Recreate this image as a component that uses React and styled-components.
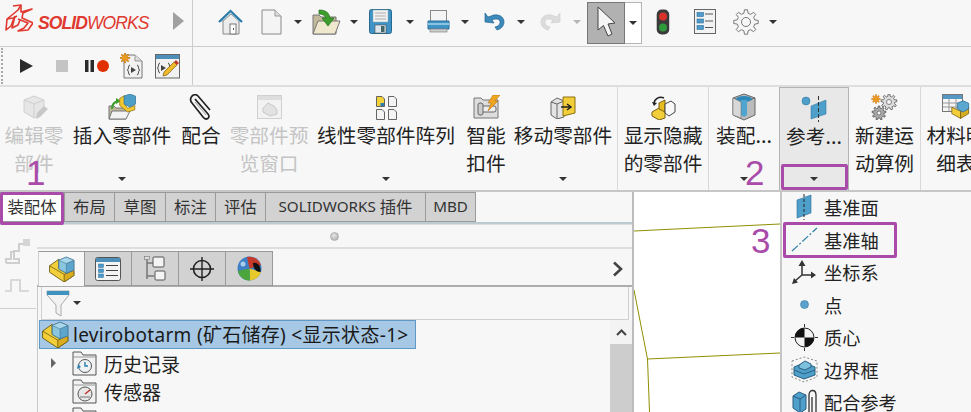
import React from "react";
import styled, { createGlobalStyle } from "styled-components";

const CJK = `"Noto Sans CJK SC", "Noto Sans", sans-serif`;
const LATIN = `"Noto Sans", "Noto Sans CJK SC", sans-serif`;
const PURPLE = "#a94ba9";

const Global = createGlobalStyle`
  html, body { margin: 0; padding: 0; background: #f7f7f7; }
  #root { width: 971px; height: 412px; overflow: hidden; }
  * { box-sizing: border-box; }
`;

const Page = styled.div`
  position: relative; width: 971px; height: 412px; overflow: hidden;
  background: #f7f7f7; font-family: ${CJK}; color: #222;
  display: flex; flex-direction: column;
`;
const Bar = styled.div`
  display: flex; flex: none; height: ${p => p.$h}px;
  border-bottom: ${p => p.$line}px solid ${p => p.$color};
`;
const BrandCell = styled.div`
  width: 193px; flex: none; border-right: 1px solid #ccc; display: flex; align-items: flex-start;
  padding: 4px 0 0 4px;
`;
const Wordmark = styled.div`
  margin: 9px 0 0 5px; width: 112px; font: italic 700 17.5px/20px "Liberation Sans", sans-serif; color: #e0392f;
  letter-spacing: -0.9px; white-space: nowrap;
`;
const WordmarkLight = styled.span`font-weight: 400;`;
const ToolRow = styled.div`
  flex: 1; display: flex; align-items: center; padding-left: 25px; padding-bottom: 3px;
`;
const Slot = styled.div`
  flex: none; width: ${p => p.$w}px; margin-left: ${p => p.$ml || 0}px; margin-top: ${p => p.$mt || 0}px;
  display: flex; align-items: center; justify-content: center;
`;
const SelectMain = styled.div`
  flex: none; width: 38px; height: 42px; margin-left: 6px; margin-top: 3px; background: #b1b1b1; border: 1px solid #777;
  display: flex; align-items: center; justify-content: center;
`;
const SelectSplit = styled.div`
  flex: none; width: 17px; height: 42px; margin-top: 3px; background: #fff; border: 1px solid #b5b5b5; border-left: none;
  display: flex; align-items: center; justify-content: center;
`;
const Caret = styled.span`
  display: block; flex: none; width: 0; height: 0;
  border-left: 4px solid transparent; border-right: 4px solid transparent;
  border-top: 4px solid ${p => p.$dim ? "#b5b5b5" : "#333"};
`;
const MacroCell = styled.div`
  width: 193px; flex: none; border-right: 1px solid #ccc; display: flex; align-items: center;
`;
const Grip = styled.div`
  flex: none; margin-left: 1px; width: 2px; height: 36px; border-left: 2px dotted #aaa;
`;

const Ribbon = styled.div`
  flex: none; height: 105px; display: flex; overflow: hidden; border-bottom: 2px solid #c6c6c6;
`;
const RibbonBtn = styled.div`
  flex: none; width: ${p => p.$w}px; display: flex; flex-direction: column; align-items: center;
  padding: 6px ${p => p.$pr || 0}px 9px 0;
  font-size: 19.7px; line-height: 28px; text-align: center; white-space: nowrap;
  color: ${p => p.$off ? "#c4c4c4" : "#222"};
  border-right: ${p => p.$sep ? "1px solid #d8d8d8" : "none"};
  ${p => p.$active ? "background:#e8e8e8;border:1px solid #b3b3b3;border-bottom:none;" : ""}
`;
const IconBox = styled.div`
  height: 28px; flex: none; display: flex; align-items: center; justify-content: center;
`;
const Label = styled.div`flex: none;`;
const CaretWrap = styled.div`margin-top: auto;`;

const Body = styled.div`flex: 1; display: flex; min-height: 0;`;
const LeftCol = styled.div`
  width: 634px; flex: none; border-right: 2px solid #bdbdbd; display: flex; flex-direction: column; min-height: 0;
`;
const TabRow = styled.div`
  flex: none; height: 32px; display: flex; border-bottom: 2px solid #bccbd0;
`;
const Tab = styled.div`
  flex: none; width: ${p => p.$w}px; height: 30px; display: flex; align-items: center; justify-content: center; gap: 4px;
  padding-bottom: 2px;
  font-size: 16.4px; color: #333; white-space: nowrap;
  background: ${p => p.$active ? "#fff" : "#d2d2d2"};
  border: 1px solid #9a9a9a; border-left: none;
`;
const LatinText = styled.span`font-family: ${LATIN}; font-size: 15.2px;`;
const PanelRow = styled.div`
  flex: 1; display: flex; min-height: 0; border-top: 1px solid #ddd;
`;
const SideStrip = styled.div`
  width: 37px; flex: none; display: flex; flex-direction: column; align-items: flex-start;
`;
const StripIcons = styled.div`
  height: 84px; width: 36px; border-bottom: 1px solid #cfcfcf; padding: 13px 0 0 5px;
  display: flex; flex-direction: column; gap: 15px;
`;
const Manager = styled.div`
  flex: 1; min-width: 0; display: flex; flex-direction: column; min-height: 0;
`;
const Splitter = styled.div`
  flex: none; height: 24px; border-bottom: 2px solid #ddd; display: flex; align-items: center; justify-content: center;
`;
const Dot = styled.span`
  width: 9px; height: 9px; border-radius: 50%; background: radial-gradient(circle at 40% 35%, #e6e6e6, #a8a8a8);
  border: 1px solid #b0b0b0;
`;
const FmBar = styled.div`
  flex: none; height: 38px; padding-top: 3px; display: flex; align-items: flex-end; border-bottom: 2px solid #adadad;
  padding-left: 1px; padding-right: 9px;
`;
const FmTab = styled.div`
  flex: none; width: 47px; height: 35px; margin-bottom: -1px; display: flex; align-items: center; justify-content: center;
  background: ${p => p.$active ? "#f7f7f7" : "#d2d2d2"};
  border: 1px solid #9a9a9a; border-left: ${p => p.$first ? "1px solid #d0d0d0" : "none"};
  border-bottom: ${p => p.$active ? "none" : "1px solid #9a9a9a"};
`;
const Chevron = styled.div`margin-left: auto; align-self: center; display: flex;`;
const TreeArea = styled.div`
  flex: 1; min-height: 0; display: flex; flex-direction: column; border-left: 1px solid #c8c8c8; overflow: hidden;
`;
const FilterBox = styled.div`
  flex: none; height: 33px; margin: 0 3px; border: 1px solid #d0d0d0; border-top: none; display: flex; align-items: center;
  padding-left: 4px; gap: 3px;
`;
const TreeSplit = styled.div`flex: 1; min-height: 0; display: flex;`;
const TreeList = styled.div`flex: 1; min-width: 0; padding-left: 1px;`;
const RootRow = styled.div`
  width: 377px; height: 29px; display: flex; align-items: center; background: #a6c8e4; border: 1px solid #5f9ac6;
  padding-left: 2px; gap: 4px; white-space: nowrap; letter-spacing: 0.3px;
  font: 19px/26px ${LATIN}; color: #1a1a1a;
`;
const TreeRow = styled.div`
  height: 28px; display: flex; align-items: center; font-size: 19px; white-space: nowrap; padding-left: 12px;
  &:first-of-type { margin-top: 3px; }
`;
const Expander = styled.span`
  flex: none; width: 0; height: 0; margin-right: 16px;
  border-top: 5px solid transparent; border-bottom: 5px solid transparent;
  border-left: ${p => p.$show ? "5px solid #666" : "5px solid transparent"};
`;
const TreeText = styled.span`margin-left: 7px;`;
const Scroll = styled.div`
  width: 22px; flex: none; display: flex; flex-direction: column;
`;
const ScrollUp = styled.div`
  height: 24px; flex: none; background: #f3f3f3; display: flex; align-items: center; justify-content: center;
`;
const ScrollThumb = styled.div`flex: 1; background: #cdcdcd;`;
const Graphics = styled.div`flex: none; width: 146px; background: #fff; position: relative; overflow: hidden;`;
const Flyout = styled.div`
  flex: none; width: 191px; background: #f7f7f7; border-left: 2px solid #c6c6c6; display: flex; flex-direction: column;
`;
const FlyItem = styled.div`
  flex: none; height: 32.5px; display: flex; align-items: center; padding: 0 0 2px 2px; font-size: 18.2px; color: #222; white-space: nowrap;
`;
const FlyIcon = styled.div`flex: none; width: 40px; display: flex; justify-content: center; align-items: center;`;

const Mark = styled.div`
  position: absolute; left: ${p => p.$x}px; top: ${p => p.$y}px; width: ${p => p.$w}px; height: ${p => p.$h}px;
  border: 3px solid ${PURPLE}; border-radius: 2px; pointer-events: none;
`;
const Num = styled.div`
  position: absolute; left: ${p => p.$x}px; top: ${p => p.$y}px;
  font: 35px/36px "Liberation Sans", sans-serif; color: ${PURPLE};
`;

const gearPath = (cx, cy, ro, ri, n) => {
  let d = "";
  const step = (Math.PI * 2) / n;
  for (let i = 0; i < n; i++) {
    const a = i * step - Math.PI / 2;
    const pt = (r, t) => `${(cx + r * Math.cos(t)).toFixed(2)} ${(cy + r * Math.sin(t)).toFixed(2)}`;
    d += `${i ? "L" : "M"}${pt(ri, a - step * 0.3)} L${pt(ro, a - step * 0.16)} L${pt(ro, a + step * 0.16)} L${pt(ri, a + step * 0.3)} `;
  }
  return d + "Z";
};

const Ic = ({ w, h, vb, children }) => (
  <svg width={w} height={h} viewBox={vb || `0 0 ${w} ${h}`} style={{ display: "block", flex: "none" }}>{children}</svg>
);

const DsMark = () => (
  <Ic w={29} h={29}>
    <g fill="none" stroke="#e0392f" strokeWidth="1.6" strokeLinejoin="round">
      <path d="M9 2 L17 1 L14 6 L8 11 L3 15 L9 14 L13 12" />
      <path d="M3 15 L2 26 L7 22 L10 14" />
      <path d="M11 12 L8 24 L14 21 L16 16" />
      <path d="M17 1 L17 8 L28 5 L19 9 L18 14 L29 19 L24 26 L14 27 L20 24 L24 19 L14 15" />
    </g>
  </Ic>
);
const Home = () => (
  <Ic w={25} h={26}>
    <path d="M5 12 V25 H21 V12 L13 5 Z" fill="#ececec" stroke="#888" />
    <path d="M1 13 L12.5 2 L24 13" fill="none" stroke="#2c7ba8" strokeWidth="2.2" />
    <path d="M3 13 L12.5 4 L22 13" fill="none" stroke="#7fb7d4" strokeWidth="0.8" />
    <rect x="12" y="15" width="6" height="10" fill="#fff" stroke="#777" />
    <rect x="15" y="19" width="1" height="2" fill="#555" />
  </Ic>
);
const Doc = () => (
  <Ic w={21} h={26}>
    <path d="M1 1 H14 L20 7 V25 H1 Z" fill="#f4f4f4" stroke="#8a8a8a" />
    <path d="M14 1 V7 H20" fill="#ddd" stroke="#9a9a9a" />
  </Ic>
);
const OpenFolder = () => (
  <Ic w={29} h={26}>
    <path d="M1 25 V6 H7 L9 8 H24 V25 Z" fill="#c2b99b" stroke="#777" />
    <path d="M1 25 L6 12 H28 L23 25 Z" fill="#efe8cf" stroke="#777" />
    <path d="M7 1 C13 1 17 3 18 9 H22 L16 17 L10 9 H14 C13 6 10 5 7 5 Z" fill="#3b9d2b" stroke="#23701a" strokeWidth="0.7" />
  </Ic>
);
const Save = () => (
  <Ic w={23} h={25}>
    <rect x="0.5" y="0.5" width="22" height="24" rx="2" fill="#3f93c7" stroke="#26688f" />
    <rect x="4" y="1" width="15" height="12" fill="#f2f2f2" stroke="#8aa" strokeWidth="0.5" />
    <path d="M6 4 H17 M6 7 H17 M6 10 H17" stroke="#aaa" />
    <rect x="6" y="16" width="11" height="8" fill="#dce6ec" stroke="#555" strokeWidth="0.6" />
    <rect x="12" y="17" width="3.5" height="6" fill="#466" />
  </Ic>
);
const Printer = () => (
  <Ic w={23} h={23}>
    <rect x="3.5" y="0.5" width="16" height="11" fill="#f4f4f4" stroke="#888" />
    <path d="M1 11 H22 V19 H1 Z" fill="#3d93c6" stroke="#2b6f99" />
    <rect x="1" y="13" width="21" height="2" fill="#8cc3e0" />
    <rect x="3" y="19" width="17" height="3" fill="#ccc" stroke="#888" strokeWidth="0.7" />
  </Ic>
);
const Undo = ({ dim }) => (
  <Ic w={21} h={19}>
    <g transform={dim ? "translate(21 0) scale(-1 1)" : undefined}>
      <path d="M7 4 C13 1 20 4 20 10 C20 14 17 17 13 18 L11 15 C15 14 16 12 16 10 C16 7 12 6 8 8 L10 11 L1 10 L1 1 L4 5 Z"
        fill={dim ? "#dcdcdc" : "#3c89bb"} stroke={dim ? "#d0d0d0" : "#27648f"} strokeWidth="0.7" />
    </g>
  </Ic>
);
const Cursor = () => (
  <Ic w={20} h={34}>
    <path d="M2 1 L2 24 L7.5 19.5 L12 30 L16 28 L12 18 L19 17 Z" fill="#f5f5f5" stroke="#444" strokeWidth="1" strokeLinejoin="round" />
  </Ic>
);
const Traffic = () => (
  <Ic w={14} h={26}>
    <rect width="12.5" height="25" x="0.7" y="0.5" rx="5" fill="#3a3a3a" />
    <circle cx="7" cy="7.5" r="4" fill="#d8322b" />
    <circle cx="7" cy="18.5" r="4" fill="#2f9a3b" />
  </Ic>
);
const ListPanel = () => (
  <Ic w={22} h={25}>
    <rect x="0.5" y="0.5" width="21" height="24" fill="#f2f2f2" stroke="#666" />
    <rect x="3" y="3.5" width="6.5" height="4" fill="#4d9acb" stroke="#2b6f99" strokeWidth="0.6" />
    <rect x="3" y="10" width="6.5" height="4" fill="#4d9acb" stroke="#2b6f99" strokeWidth="0.6" />
    <rect x="3" y="16.5" width="6.5" height="4" fill="#4d9acb" stroke="#2b6f99" strokeWidth="0.6" />
    <path d="M11 5 H19 M11 12 H19 M11 18.5 H19" stroke="#555" strokeWidth="1" />
  </Ic>
);
const FmList = () => (
  <Ic w={26} h={24}>
    <rect x="0.5" y="0.5" width="25" height="23" rx="2" fill="#f4f4f4" stroke="#555" />
    <rect x="1" y="1" width="24" height="4" fill="#4d8fb9" />
    <rect x="3.5" y="7" width="5" height="3.5" fill="#4d9acb" stroke="#2b6f99" strokeWidth="0.5" />
    <rect x="3.5" y="12" width="5" height="3.5" fill="#4d9acb" stroke="#2b6f99" strokeWidth="0.5" />
    <rect x="3.5" y="17" width="5" height="3.5" fill="#4d9acb" stroke="#2b6f99" strokeWidth="0.5" />
    <path d="M11 8.5 H23 M11 13.5 H23 M11 18.5 H23" stroke="#444" />
  </Ic>
);
const GearIcon = () => (
  <Ic w={26} h={26}>
    <path d={gearPath(13, 13, 12.3, 9, 8)} fill="#f7f7f7" stroke="#777" strokeWidth="1" strokeLinejoin="round" />
    <circle cx="13" cy="13" r="4.5" fill="#f7f7f7" stroke="#777" />
  </Ic>
);
const Play = () => <Ic w={13} h={14}><path d="M0 0 L13 7 L0 14 Z" fill="#2a2a2a" /></Ic>;
const Stop = () => <Ic w={12} h={12}><rect width="12" height="12" fill="#c4c4c4" /></Ic>;
const Pause = () => <Ic w={9} h={12}><path d="M0 0 H3.5 V12 H0 Z M5.5 0 H9 V12 H5.5 Z" fill="#2a2a2a" /></Ic>;
const Rec = () => <Ic w={12} h={12}><circle cx="6" cy="6" r="6" fill="#e03000" /></Ic>;
const MacroNew = () => (
  <Ic w={23} h={26}>
    <path d="M4 2 H15 L22 8 V25 H4 Z" fill="#f2f2f2" stroke="#777" />
    <path d="M15 2 V8 H22" fill="#ddd" stroke="#999" />
    <path d={gearPath(5, 5, 5, 3, 8)} fill="#eb9b1c" stroke="#b86a10" strokeWidth="0.5" />
    <path d="M10 12 C8 12 9 16 7.5 17 C9 18 8 22 10 22 M17 12 C19 12 18 16 19.5 17 C18 18 19 22 17 22" fill="none" stroke="#444" />
    <path d="M11 14 L16 17 L11 20 Z" fill="#444" />
  </Ic>
);
const MacroEdit = () => (
  <Ic w={25} h={25}>
    <rect x="0.5" y="0.5" width="24" height="23.5" fill="#f2f2f2" stroke="#666" />
    <rect x="1" y="1" width="23" height="4" fill="#4d8fb9" />
    <path d="M5 9 C3 9 4 13 2.5 14 C4 15 3 19 5 19 M13 9 C15 9 14 13 15 14" fill="none" stroke="#444" />
    <path d="M6 11 L11 14 L6 17 Z" fill="#444" />
    <path d="M8 22 L9 18 L19 8 L22 11 L12 21 Z" fill="#efb92c" stroke="#7a5a10" strokeWidth="0.7" />
    <path d="M19 8 L21 6 L24 9 L22 11 Z" fill="#c0392b" />
  </Ic>
);
const Block = ({ s = 24 }) => (
  <Ic w={s} h={s} vb="0 0 24 24">
    <path d="M0.5 9 L9 3 V11 L23 14 V18 L14 24 L0.5 15 Z" fill="#f2cf3a" stroke="#6a5a10" strokeWidth="0.8" strokeLinejoin="round" />
    <path d="M14 17 L23 13 V18 L14 24 Z" fill="#d9ad1f" stroke="#6a5a10" strokeWidth="0.7" />
    <path d="M0.5 9 L14 17" fill="none" stroke="#6a5a10" strokeWidth="0.7" />
    <path d="M9 4 L16 1 L23 4 V13 L16 16 L9 12 Z" fill="#8ac6e0" stroke="#3b6f8c" strokeWidth="0.8" />
    <path d="M16 7 L23 4 V13 L16 16 Z" fill="#5ea5cd" stroke="#3b6f8c" strokeWidth="0.5" />
    <path d="M9 4 L16 1 L23 4 L16 7 Z" fill="#a8d6ea" stroke="#3b6f8c" strokeWidth="0.5" />
  </Ic>
);
const EditPart = () => (
  <Ic w={28} h={26}>
    <path d="M4 6 L14 2 L24 6 V18 L14 24 L4 18 Z" fill="#e6e6e6" stroke="#d0d0d0" />
    <path d="M4 6 L14 10 L24 6 M14 10 V24" fill="none" stroke="#d0d0d0" />
    <path d="M16 25 L17 19 L24 12 L28 15 L20 23 Z" fill="#c8c8c8" />
  </Ic>
);
const InsertPart = () => (
  <Ic w={28} h={26}>
    <path d="M1 25 V12 H6 L8 14 H18 V25 Z" fill="#bfb89c" stroke="#777" />
    <path d="M1 25 L4 17 H22 L18 25 Z" fill="#f2f2f2" stroke="#777" />
    <path d="M4 15 C4 11 6 8 10 7" fill="none" stroke="#3b9d2b" strokeWidth="2" />
    <path d="M8 4 L13 7 L8 10 Z" fill="#3b9d2b" />
    <g transform="translate(11 0) scale(.72)"><path d="M1 6 L8 2 V14 L12 20 L22 16 V22 L12 25 L1 16 Z" fill="#f2c92e" stroke="#8a6f10" /><path d="M7 3 L15 0 L23 3 V14 L15 18 L7 14 Z" fill="#4e9fc8" stroke="#2b6f99" /></g>
  </Ic>
);
const Clip = () => (
  <Ic w={24} h={26}>
    <path d="M6 6 L19 21 C22 25 17 28 14 24 L3 10 C-1 5 5 -1 9 3 L21 17" transform="translate(0 -1)" fill="none" stroke="#222" strokeWidth="1.7" />
    <path d="M6 8 L17 21" fill="none" stroke="#888" strokeWidth="0.8" />
  </Ic>
);
const PreviewWin = () => (
  <Ic w={25} h={24}>
    <rect x="0.5" y="0.5" width="24" height="23" fill="#f2f2f2" stroke="#d0d0d0" />
    <rect x="1" y="1" width="23" height="4" fill="#dedede" />
    <path d="M6 13 L11 8 L17 11 L20 15 V19 L13 21 L6 17 Z" fill="#e2e2e2" stroke="#c8c8c8" />
  </Ic>
);
const SmallDoc = ({ x, y, c }) => (
  <g transform={`translate(${x} ${y})`}>
    <path d="M.5 .5 H6 L8.5 3 V10.5 H.5 Z" fill={c || "#f4f4f4"} stroke="#555" strokeWidth="0.9" />
    {c && <rect x="4.5" y="7" width="3.5" height="3" fill="#2b7fb0" />}
  </g>
);
const LinearPattern = () => (
  <Ic w={21} h={25}>
    <SmallDoc x={0} y={1} c="#f2d23a" />
    <SmallDoc x={12} y={1} />
    <SmallDoc x={0} y={14} />
    <SmallDoc x={12} y={14} />
  </Ic>
);
const SmartFastener = () => (
  <Ic w={27} h={24}>
    <path d="M1 23 V3 H8 L10 5 H25 V23 Z" fill="#ddd" stroke="#777" />
    <rect x="8" y="11" width="15" height="6" rx="2" fill="#eee" stroke="#666" />
    <rect x="5" y="8" width="5" height="12" rx="2" fill="#ccc" stroke="#666" />
    <path d="M20 0 H27 L22 6 H25 L15 16 L18 8 H15 Z" fill="#efa520" stroke="#b06a10" strokeWidth="0.5" />
  </Ic>
);
const MovePart = () => (
  <Ic w={26} h={24}>
    <path d="M1 7 L7 3 L14 6 V22 L7 24 L1 20 Z" fill="#e4e4e4" stroke="#666" />
    <path d="M1 7 L7 9 V24 M7 9 L14 6" fill="none" stroke="#666" />
    <path d="M13 2 H25 V18 L13 21 Z" fill="#f2cf3a" stroke="#8a6f10" />
    <path d="M11 12 H20 M17 9 L21 12 L17 15" fill="none" stroke="#222" strokeWidth="1.5" />
  </Ic>
);
const ShowHide = () => (
  <Ic w={25} h={25}>
    <path d="M1 17 L8 13 L14 16 V23 L8 25 L1 21 Z" fill="#f2cf3a" stroke="#7a6010" />
    <path d="M8 8 L14 5 L14 17 L8 14 Z" fill="#e8bc20" stroke="#7a6010" />
    <path d="M14 9 L20 6 L24 9 V17 L18 21 L14 18 Z" fill="#f8f8f8" stroke="#444" />
    <path d="M3 9 C3 4 8 1 13 3" fill="none" stroke="#222" strokeWidth="1.5" />
    <path d="M1 7 L3 11 L6 8 Z" fill="#222" />
  </Ic>
);
const Assembly = () => (
  <Ic w={24} h={28}>
    <path d="M1 5 L12 1 L23 5 V22 L12 27 L1 22 Z" fill="#bbb" stroke="#666" />
    <path d="M1 5 L12 9 L23 5" fill="none" stroke="#666" />
    <ellipse cx="12" cy="6" rx="8" ry="3" fill="#2e88b8" />
    <path d="M9 7 H15 V22 L12 24 L9 22 Z" fill="#4fa5cf" />
    <path d="M1 5 V22 L9 25 V9 Z" fill="#d8d8d8" stroke="#777" strokeWidth="0.6" />
  </Ic>
);
const Reference = () => (
  <Ic w={27} h={27}>
    <circle cx="5" cy="6" r="4" fill="#4f9fcb" stroke="#2b6f99" strokeWidth="0.5" />
    <path d="M10 11 L25 5 V19 L10 24 Z" fill="#4f9fcb" stroke="#2b6f99" strokeWidth="0.5" />
    <path d="M17.5 1 V27" stroke="#333" strokeWidth="1" strokeDasharray="4 2" />
  </Ic>
);
const MotionStudy = () => (
  <Ic w={27} h={26}>
    <path d={gearPath(5, 5, 4.5, 2.8, 8)} fill="#ee9a1c" stroke="#b86a10" strokeWidth="0.4" />
    <path d={gearPath(18, 8, 8, 5.8, 9)} fill="#ddd" stroke="#555" strokeWidth="0.8" />
    <circle cx="18" cy="8" r="2.5" fill="#f7f7f7" stroke="#555" strokeWidth="0.7" />
    <path d={gearPath(8, 19, 7, 5, 9)} fill="#aaa" stroke="#555" strokeWidth="0.8" />
    <circle cx="8" cy="19" r="2" fill="#f7f7f7" stroke="#555" strokeWidth="0.7" />
  </Ic>
);
const Bom = () => (
  <Ic w={28} h={26}>
    <rect x="0.5" y="0.5" width="20" height="17" fill="#f6f6f6" stroke="#777" />
    <rect x="1" y="1" width="19" height="4" fill="#5599c2" />
    <path d="M1 9 H20 M1 13 H20 M7 5 V17 M14 5 V17" stroke="#999" />
    <g transform="translate(9 6) scale(.8)"><path d="M1 9 L12 14 V23 L1 17 Z" fill="#f2cf3a" stroke="#7a6010" /><path d="M12 14 L22 9 V17 L12 23 Z" fill="#d8ad20" stroke="#7a6010" /><path d="M8 4 L15 1 L22 4 V11 L15 15 L8 11 Z" fill="#5aa7cf" stroke="#2b6f99" /></g>
  </Ic>
);
const Stack1 = () => (
  <Ic w={26} h={26}>
    <g fill="none" stroke="#cfcfcf" strokeWidth="2">
      <path d="M1 25 H14 V21 H9 V13 H14 V6 H19" />
      <path d="M1 25 V21 H6 V14 H9" />
    </g>
    <rect x="18" y="1" width="7" height="7" fill="#d5d5d5" />
  </Ic>
);
const Stack2 = () => (
  <Ic w={25} h={13}>
    <path d="M0 12 H6 V1 H15 V12 H24" fill="none" stroke="#cfcfcf" strokeWidth="1.6" />
  </Ic>
);
const FmTree = () => (
  <Ic w={22} h={26}>
    <path d="M3 1 V23 M3 7 H10 M3 20 H10" stroke="#777" strokeWidth="1.5" fill="none" />
    <rect x="0.5" y="0.5" width="5" height="3" fill="#ddd" stroke="#777" strokeWidth="0.6" />
    <rect x="9" y="1" width="11" height="10" rx="1" fill="#f4f4f4" stroke="#555" />
    <rect x="11" y="15" width="10" height="9" rx="1" fill="#f4f4f4" stroke="#555" />
  </Ic>
);
const Crosshair = () => (
  <Ic w={26} h={26}>
    <circle cx="13" cy="13" r="8.5" fill="none" stroke="#222" strokeWidth="1.6" />
    <path d="M13 1 V25 M1 13 H25" stroke="#222" strokeWidth="1.4" />
  </Ic>
);
const Appearance = () => (
  <Ic w={25} h={25}>
    <circle cx="12.5" cy="12.5" r="12" fill="#3f7fc4" />
    <path d="M12.5 12.5 L24 16 A12 12 0 0 1 13 24.5 Z" fill="#e7c92c" />
    <path d="M12.5 12.5 L13 24.5 A12 12 0 0 1 .8 15 Z" fill="#4ba53a" />
    <path d="M12.5 12.5 L10 1 A12 12 0 0 1 24 9 Z" fill="#c53a2b" />
    <path d="M16 7 C20 6 24 9 23.5 16 C19 16 16 12 16 7 Z" fill="#111" />
    <circle cx="6" cy="8" r="2.5" fill="#a9cdec" />
  </Ic>
);
const ChevronIcon = () => (
  <Ic w={11} h={16}>
    <path d="M2 1.5 L9 8 L2 14.5" fill="none" stroke="#444" strokeWidth="2.6" />
  </Ic>
);
const Filter = () => (
  <Ic w={24} h={27}>
    <path d="M1 1 H23 V5 L15 15 V26 L10 23 V15 L1 5 Z" fill="#f2f2f2" stroke="#aaa" />
    <path d="M1 1 H23 V5 H1 Z" fill="#3f93bf" />
  </Ic>
);
const FolderBadge = ({ kind }) => (
  <Ic w={25} h={26}>
    <path d="M1 25 V2 H9 L11 5 H24 V25 Z" fill="#f2f2f2" stroke="#555" />
    <path d="M1 7 H24" stroke="#999" />
    {kind === "clock" && <g>
      <circle cx="13" cy="16" r="6.5" fill="#eef3f5" stroke="#555" />
      <path d="M13 12 V16 H16" stroke="#2b7fb0" strokeWidth="1.4" fill="none" />
      <path d="M6 14 L5 19 L9 17 Z" fill="#2b7fb0" />
    </g>}
    {kind === "gauge" && <g>
      <circle cx="13" cy="16" r="7" fill="#e7e7e7" stroke="#555" />
      <path d="M13 16 L18 12" stroke="#c03025" strokeWidth="1.5" />
      <path d="M8 19 H18" stroke="#777" />
    </g>}
  </Ic>
);
const Plane = () => (
  <Ic w={18} h={26}>
    <path d="M2 6 L16 1 V19 L2 24 Z" fill="#4f9fcb" stroke="#2b6f99" strokeWidth="0.6" />
    <path d="M9 0 V26" stroke="#222" strokeDasharray="3 2" />
  </Ic>
);
const Axis = () => (
  <Ic w={27} h={25}>
    <path d="M1 24 L26 1" stroke="#2f7fa8" strokeWidth="1.2" strokeDasharray="8 2 2 2" />
  </Ic>
);
const Coord = () => (
  <Ic w={25} h={25}>
    <path d="M10 5 V15 M10 15 H20 M10 15 L3 21" stroke="#333" strokeWidth="1.5" />
    <path d="M10 0 L13.5 6 H6.5 Z M24 15 L19 11.5 V18.5 Z M0 24 L2 18 L6 22.5 Z" fill="#333" />
  </Ic>
);
const PointIcon = () => (
  <Ic w={9} h={9}><circle cx="4.5" cy="4.5" r="4" fill="#5ba3cc" stroke="#3e7fa5" strokeWidth="0.6" /></Ic>
);
const Com = () => (
  <Ic w={27} h={27}>
    <circle cx="13.5" cy="13.5" r="9.5" fill="#f4f4f4" stroke="#222" />
    <path d="M13.5 4 A9.5 9.5 0 0 0 4 13.5 H13.5 Z M13.5 23 A9.5 9.5 0 0 0 23 13.5 H13.5 Z" fill="#111" />
    <path d="M13.5 0 V3 M13.5 24 V27 M0 13.5 H3 M24 13.5 H27" stroke="#333" />
  </Ic>
);
const BBox = () => (
  <Ic w={27} h={27}>
    <path d="M1 5 L13 1 L26 5 V21 L13 26 L1 21 Z" fill="none" stroke="#888" strokeDasharray="2 2" />
    <path d="M3 11 L13 7 L24 11 V19 L13 23 L3 19 Z" fill="#4f9fcb" stroke="#2b5f80" />
    <path d="M8 9 L14 5 L20 8 V11 L14 14 L8 12 Z" fill="#7cc0de" stroke="#2b5f80" />
    <path d="M3 14 L13 18 L24 14" fill="none" stroke="#2b5f80" />
  </Ic>
);
const MateRef = () => (
  <Ic w={25} h={26}>
    <path d="M1 7 L7 3 L14 6 V20 L8 24 L1 19 Z" fill="#4f9fcb" stroke="#2b5f80" />
    <path d="M1 7 L8 10 V24 M8 10 L14 6" fill="none" stroke="#2b5f80" />
    <path d="M17 24 V6 C17 0 24 0 24 6 V22 C24 26 20 26 20 22 V8" fill="none" stroke="#333" strokeWidth="1.3" />
  </Ic>
);

const ribbon = [
  { w: 68, off: true, icon: <EditPart />, lines: ["编辑零", "部件"] },
  { w: 108, icon: <InsertPart />, lines: ["插入零部件"], caret: true },
  { w: 50, icon: <Clip />, lines: ["配合"] },
  { w: 86, off: true, icon: <PreviewWin />, lines: ["零部件预", "览窗口"] },
  { w: 148, icon: <LinearPattern />, lines: ["线性零部件阵列"], caret: true },
  { w: 52, icon: <SmartFastener />, lines: ["智能", "扣件"] },
  { w: 106, pr: 3, sep: true, icon: <MovePart />, lines: ["移动零部件"], caret: true },
  { w: 91, sep: true, icon: <ShowHide />, lines: ["显示隐藏", "的零部件"] },
  { w: 70, icon: <Assembly />, lines: ["装配..."], caret: true },
  { w: 70, active: true, icon: <Reference />, lines: ["参考..."], caret: true },
  { w: 72, sep: true, icon: <MotionStudy />, lines: ["新建运", "动算例"] },
  { w: 70, icon: <Bom />, lines: ["材料明", "细表"] },
];

const tabs = [
  { t: "装配体", w: 65, active: true }, { t: "布局", w: 50 }, { t: "草图", w: 51 }, { t: "标注", w: 50 }, { t: "评估", w: 50 },
  { t: <><LatinText>SOLIDWORKS</LatinText>插件</>, w: 160 }, { t: <LatinText>MBD</LatinText>, w: 50 },
];

const fly = [
  [<Plane />, "基准面"], [<Axis />, "基准轴"], [<Coord />, "坐标系"], [<PointIcon />, "点"],
  [<Com />, "质心"], [<BBox />, "边界框"], [<MateRef />, "配合参考"],
];

export default function App() {
  return (
    <Page>
      <Global />
      <Bar $h={47} $line={1} $color="#ccc">
        <BrandCell>
          <DsMark />
          <Wordmark>SOLID<WordmarkLight>WORKS</WordmarkLight></Wordmark>
          <Slot $w={11} $ml={23} $mt={8}><Ic w={11} h={18}><path d="M0 0 L11 9 L0 18 Z" fill="#a0a0a0" /></Ic></Slot>
        </BrandCell>
        <ToolRow>
          <Slot $w={24}><Home /></Slot>
          <Slot $w={24} $ml={17}><Doc /></Slot>
          <Slot $w={8} $ml={11}><Caret /></Slot>
          <Slot $w={29} $ml={10}><OpenFolder /></Slot>
          <Slot $w={8} $ml={9}><Caret /></Slot>
          <Slot $w={23} $ml={11}><Save /></Slot>
          <Slot $w={8} $ml={14}><Caret /></Slot>
          <Slot $w={24} $ml={12}><Printer /></Slot>
          <Slot $w={8} $ml={11}><Caret /></Slot>
          <Slot $w={22} $ml={14}><Undo /></Slot>
          <Slot $w={8} $ml={12}><Caret /></Slot>
          <Slot $w={21} $ml={15}><Undo dim /></Slot>
          <Slot $w={8} $ml={12}><Caret $dim /></Slot>
          <SelectMain><Cursor /></SelectMain>
          <SelectSplit><Caret /></SelectSplit>
          <Slot $w={14} $ml={14}><Traffic /></Slot>
          <Slot $w={22} $ml={24}><ListPanel /></Slot>
          <Slot $w={26} $ml={17}><GearIcon /></Slot>
          <Slot $w={8} $ml={10}><Caret /></Slot>
        </ToolRow>
      </Bar>
      <Bar $h={40} $line={2} $color="#dedede">
        <MacroCell>
          <Grip />
          <Slot $w={13} $ml={17}><Play /></Slot>
          <Slot $w={12} $ml={23}><Stop /></Slot>
          <Slot $w={9} $ml={17}><Pause /></Slot>
          <Slot $w={12} $ml={3}><Rec /></Slot>
          <Slot $w={23} $ml={11}><MacroNew /></Slot>
          <Slot $w={25} $ml={12}><MacroEdit /></Slot>
        </MacroCell>
      </Bar>
      <Ribbon>
        {ribbon.map((b, i) => (
          <RibbonBtn key={i} $w={b.w} $pr={b.pr} $off={b.off} $sep={b.sep} $active={b.active}>
            <IconBox>{b.icon}</IconBox>
            <Label>{b.lines.map(l => <div key={l}>{l}</div>)}</Label>
            {b.caret && <CaretWrap><Caret /></CaretWrap>}
          </RibbonBtn>
        ))}
      </Ribbon>
      <Body>
        <LeftCol>
          <TabRow>
            {tabs.map((t, i) => <Tab key={i} $w={t.w} $active={t.active}>{t.t}</Tab>)}
          </TabRow>
          <PanelRow>
            <SideStrip>
              <StripIcons><Stack1 /><Stack2 /></StripIcons>
            </SideStrip>
            <Manager>
              <Splitter><Dot /></Splitter>
              <FmBar>
                <FmTab $active $first><Block s={26} /></FmTab>
                <FmTab><FmList /></FmTab>
                <FmTab><FmTree /></FmTab>
                <FmTab><Crosshair /></FmTab>
                <FmTab><Appearance /></FmTab>
                <Chevron><ChevronIcon /></Chevron>
              </FmBar>
              <TreeArea>
                <FilterBox><Filter /><Caret /></FilterBox>
                <TreeSplit>
                  <TreeList>
                    <RootRow><Block s={27} />levirobotarm (矿石储存) &lt;显示状态-1&gt;</RootRow>
                    <TreeRow><Expander $show /><FolderBadge kind="clock" /><TreeText>历史记录</TreeText></TreeRow>
                    <TreeRow><Expander /><FolderBadge kind="gauge" /><TreeText>传感器</TreeText></TreeRow>
                    <TreeRow><Expander /><FolderBadge /></TreeRow>
                  </TreeList>
                  <Scroll>
                    <ScrollUp>
                      <Ic w={11} h={7}><path d="M1 6 L5.5 1.5 L10 6" fill="none" stroke="#444" strokeWidth="2" /></Ic>
                    </ScrollUp>
                    <ScrollThumb />
                  </Scroll>
                </TreeSplit>
              </TreeArea>
            </Manager>
          </PanelRow>
        </LeftCol>
        <Graphics>
          <Ic w={146} h={220}>
            <g fill="none" stroke="#8f8f00" strokeWidth="1">
              <path d="M0 39 L146 32" />
              <path d="M0 98 L13.5 167 L146 161" />
              <path d="M13.5 167 L15.5 220" />
            </g>
          </Ic>
        </Graphics>
        <Flyout>
          {fly.map(([icon, t]) => (
            <FlyItem key={t}><FlyIcon>{icon}</FlyIcon>{t}</FlyItem>
          ))}
        </Flyout>
      </Body>
      <Mark $x={0} $y={192} $w={64} $h={33} />
      <Mark $x={781} $y={164} $w={67} $h={26} />
      <Mark $x={783} $y={222} $w={114} $h={36} />
      <Num $x={26} $y={155}>1</Num>
      <Num $x={745} $y={155}>2</Num>
      <Num $x={751} $y={223}>3</Num>
    </Page>
  );
}
